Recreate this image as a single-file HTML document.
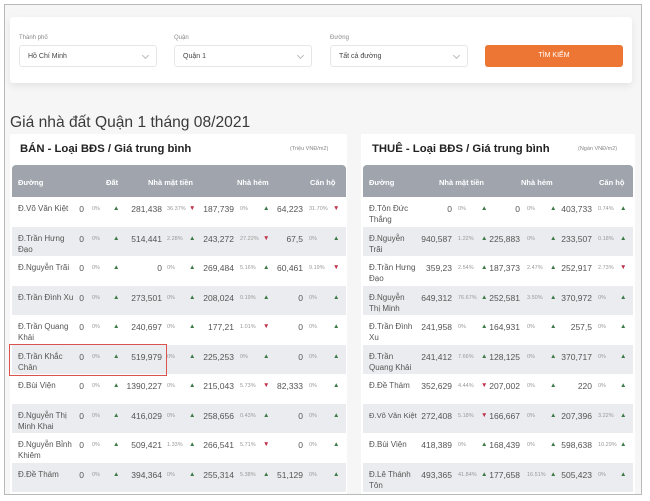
<!DOCTYPE html>
<html><head><meta charset="utf-8">
<style>
*{margin:0;padding:0;box-sizing:border-box}
body{width:650px;height:501px;background:#fff;font-family:"Liberation Sans",sans-serif;position:relative;overflow:hidden;color:#444}
.frame{position:absolute;left:4px;top:4px;width:638px;height:491px;border:1px solid #b9b9b9;background:#f6f6f6}
.card{position:absolute;left:10px;top:17px;width:622px;height:66px;background:#fff;border-radius:3px;box-shadow:0 3px 8px rgba(0,0,0,.08)}
.lbl{position:absolute;top:35px;font-size:6px;color:#888}
.sel{position:absolute;top:45px;height:22px;width:138px;border:1px solid #e6e6e6;border-radius:3px;background:#fff;font-size:7px;color:#444;padding:7px 0 0 8px}
.sel:after{content:"";position:absolute;right:8px;top:7px;width:4px;height:4px;border-right:1px solid #bbb;border-bottom:1px solid #bbb;transform:rotate(45deg)}
.btn{position:absolute;left:485px;top:45px;width:138px;height:22px;background:#ee7634;border-radius:3px;color:#fff;font-size:7px;text-align:center;line-height:22px}
.title{position:absolute;left:10px;top:114px;font-size:15.6px;color:#3a3a3a}
.panel{position:absolute;top:134px;background:#fff;height:360px}
.ph{position:absolute;top:143px;font-size:11.3px;color:#222;font-weight:bold}
.unit{position:absolute;top:146px;font-size:5.5px;color:#888}
.tbl{position:absolute;top:165px}
.hd{height:32px;background:#9fa4ad;border-radius:4px 4px 0 0;position:relative;color:#fff;font-size:7.5px;font-weight:bold}
.hd span{position:absolute;top:13px}
.r{height:29.5px;position:relative;font-size:8.5px;color:#555}
.r span{position:absolute;top:7px;white-space:nowrap}
.nm{left:6px;width:58px;white-space:normal!important;line-height:11px;top:6px!important;font-size:8px}
.t2 .nm{width:47px}
.v{text-align:right;width:60px}
.p{font-size:5.5px;color:#999;top:9px!important}
.u,.d{font-size:6.5px;top:8px!important}
.u{color:#3d7a48}
.d{color:#c0304a}
</style></head><body>
<div class="frame"></div>
<div class="card"></div>
<div class="lbl" style="left:19px">Thành phố</div>
<div class="lbl" style="left:174px">Quận</div>
<div class="lbl" style="left:330px">Đường</div>
<div class="sel" style="left:19px">Hồ Chí Minh</div>
<div class="sel" style="left:174px">Quận 1</div>
<div class="sel" style="left:330px">Tất cả đường</div>
<div class="btn">TÌM KIẾM</div>
<div class="title">Giá nhà đất Quận 1 tháng 08/2021</div>
<div class="panel" style="left:10px;width:337px"></div>
<div class="panel" style="left:361px;width:274px"></div>
<div class="ph" style="left:20px">BÁN - Loại BĐS / Giá trung bình</div>
<div class="unit" style="left:290px">(Triệu VNĐ/m2)</div>
<div class="ph" style="left:372px">THUÊ - Loại BĐS / Giá trung bình</div>
<div class="unit" style="left:578px">(Ngàn VNĐ/m2)</div>

<div class="tbl" style="left:12px;width:334px">
<div class="hd"><span style="left:6px">Đường</span><span style="left:94px">Đất</span><span style="left:136px">Nhà mặt tiền</span><span style="left:225px">Nhà hẻm</span><span style="left:298px">Căn hộ</span></div>
<div>
<div class="r" style="background:#fff"><span class="nm">Đ.Võ Văn Kiệt</span><span class="v" style="left:12px">0</span><span class="p" style="left:80px">0%</span><span class="u" style="left:101px">▲</span><span class="v" style="left:90px">281,438</span><span class="p" style="left:155px">36.37%</span><span class="d" style="left:177px">▼</span><span class="v" style="left:162px">187,739</span><span class="p" style="left:228px">0%</span><span class="u" style="left:251px">▲</span><span class="v" style="left:231px">64,223</span><span class="p" style="left:297px">31.70%</span><span class="d" style="left:321px">▼</span></div>
<div class="r" style="background:#ebecef"><span class="nm">Đ.Trần Hưng Đạo</span><span class="v" style="left:12px">0</span><span class="p" style="left:80px">0%</span><span class="u" style="left:101px">▲</span><span class="v" style="left:90px">514,441</span><span class="p" style="left:155px">2.28%</span><span class="u" style="left:177px">▲</span><span class="v" style="left:162px">243,272</span><span class="p" style="left:228px">27.22%</span><span class="d" style="left:251px">▼</span><span class="v" style="left:231px">67,5</span><span class="p" style="left:297px">0%</span><span class="u" style="left:321px">▲</span></div>
<div class="r" style="background:#fff"><span class="nm">Đ.Nguyễn Trãi</span><span class="v" style="left:12px">0</span><span class="p" style="left:80px">0%</span><span class="u" style="left:101px">▲</span><span class="v" style="left:90px">0</span><span class="p" style="left:155px">0%</span><span class="u" style="left:177px">▲</span><span class="v" style="left:162px">269,484</span><span class="p" style="left:228px">5.16%</span><span class="u" style="left:251px">▲</span><span class="v" style="left:231px">60,461</span><span class="p" style="left:297px">9.19%</span><span class="d" style="left:321px">▼</span></div>
<div class="r" style="background:#ebecef"><span class="nm">Đ.Trần Đình Xu</span><span class="v" style="left:12px">0</span><span class="p" style="left:80px">0%</span><span class="u" style="left:101px">▲</span><span class="v" style="left:90px">273,501</span><span class="p" style="left:155px">0%</span><span class="u" style="left:177px">▲</span><span class="v" style="left:162px">208,024</span><span class="p" style="left:228px">0.19%</span><span class="u" style="left:251px">▲</span><span class="v" style="left:231px">0</span><span class="p" style="left:297px">0%</span><span class="u" style="left:321px">▲</span></div>
<div class="r" style="background:#fff"><span class="nm">Đ.Trần Quang Khải</span><span class="v" style="left:12px">0</span><span class="p" style="left:80px">0%</span><span class="u" style="left:101px">▲</span><span class="v" style="left:90px">240,697</span><span class="p" style="left:155px">0%</span><span class="u" style="left:177px">▲</span><span class="v" style="left:162px">177,21</span><span class="p" style="left:228px">1.01%</span><span class="d" style="left:251px">▼</span><span class="v" style="left:231px">0</span><span class="p" style="left:297px">0%</span><span class="u" style="left:321px">▲</span></div>
<div class="r" style="background:#ebecef"><span class="nm">Đ.Trần Khắc Chân</span><span class="v" style="left:12px">0</span><span class="p" style="left:80px">0%</span><span class="u" style="left:101px">▲</span><span class="v" style="left:90px">519,979</span><span class="p" style="left:155px">0%</span><span class="u" style="left:177px">▲</span><span class="v" style="left:162px">225,253</span><span class="p" style="left:228px">0%</span><span class="u" style="left:251px">▲</span><span class="v" style="left:231px">0</span><span class="p" style="left:297px">0%</span><span class="u" style="left:321px">▲</span></div>
<div class="r" style="background:#fff"><span class="nm">Đ.Bùi Viện</span><span class="v" style="left:12px">0</span><span class="p" style="left:80px">0%</span><span class="u" style="left:101px">▲</span><span class="v" style="left:90px">1390,227</span><span class="p" style="left:155px">0%</span><span class="u" style="left:177px">▲</span><span class="v" style="left:162px">215,043</span><span class="p" style="left:228px">5.73%</span><span class="d" style="left:251px">▼</span><span class="v" style="left:231px">82,333</span><span class="p" style="left:297px">0%</span><span class="u" style="left:321px">▲</span></div>
<div class="r" style="background:#ebecef"><span class="nm">Đ.Nguyễn Thị Minh Khai</span><span class="v" style="left:12px">0</span><span class="p" style="left:80px">0%</span><span class="u" style="left:101px">▲</span><span class="v" style="left:90px">416,029</span><span class="p" style="left:155px">0%</span><span class="u" style="left:177px">▲</span><span class="v" style="left:162px">258,656</span><span class="p" style="left:228px">0.43%</span><span class="u" style="left:251px">▲</span><span class="v" style="left:231px">0</span><span class="p" style="left:297px">0%</span><span class="u" style="left:321px">▲</span></div>
<div class="r" style="background:#fff"><span class="nm">Đ.Nguyễn Bỉnh Khiêm</span><span class="v" style="left:12px">0</span><span class="p" style="left:80px">0%</span><span class="u" style="left:101px">▲</span><span class="v" style="left:90px">509,421</span><span class="p" style="left:155px">1.33%</span><span class="u" style="left:177px">▲</span><span class="v" style="left:162px">266,541</span><span class="p" style="left:228px">5.71%</span><span class="d" style="left:251px">▼</span><span class="v" style="left:231px">0</span><span class="p" style="left:297px">0%</span><span class="u" style="left:321px">▲</span></div>
<div class="r" style="background:#ebecef"><span class="nm">Đ.Đề Thám</span><span class="v" style="left:12px">0</span><span class="p" style="left:80px">0%</span><span class="u" style="left:101px">▲</span><span class="v" style="left:90px">394,364</span><span class="p" style="left:155px">0%</span><span class="u" style="left:177px">▲</span><span class="v" style="left:162px">255,314</span><span class="p" style="left:228px">5.38%</span><span class="u" style="left:251px">▲</span><span class="v" style="left:231px">51,129</span><span class="p" style="left:297px">0%</span><span class="u" style="left:321px">▲</span></div>
</div></div>

<div class="tbl t2" style="left:363px;width:270px">
<div class="hd"><span style="left:6px">Đường</span><span style="left:76px">Nhà mặt tiền</span><span style="left:158px">Nhà hẻm</span><span style="left:236px">Căn hộ</span></div>
<div>
<div class="r" style="background:#fff"><span class="nm">Đ.Tôn Đức Thắng</span><span class="v" style="left:29px">0</span><span class="p" style="left:95px">0%</span><span class="u" style="left:118px">▲</span><span class="v" style="left:97px">0</span><span class="p" style="left:164px">0%</span><span class="u" style="left:187px">▲</span><span class="v" style="left:169px">403,733</span><span class="p" style="left:235px">0.74%</span><span class="u" style="left:257px">▲</span></div>
<div class="r" style="background:#ebecef"><span class="nm">Đ.Nguyễn Trãi</span><span class="v" style="left:29px">940,587</span><span class="p" style="left:95px">1.22%</span><span class="u" style="left:118px">▲</span><span class="v" style="left:97px">225,883</span><span class="p" style="left:164px">0%</span><span class="u" style="left:187px">▲</span><span class="v" style="left:169px">233,507</span><span class="p" style="left:235px">0.18%</span><span class="u" style="left:257px">▲</span></div>
<div class="r" style="background:#fff"><span class="nm">Đ.Trần Hưng Đạo</span><span class="v" style="left:29px">359,23</span><span class="p" style="left:95px">2.54%</span><span class="u" style="left:118px">▲</span><span class="v" style="left:97px">187,373</span><span class="p" style="left:164px">2.47%</span><span class="u" style="left:187px">▲</span><span class="v" style="left:169px">252,917</span><span class="p" style="left:235px">2.73%</span><span class="d" style="left:257px">▼</span></div>
<div class="r" style="background:#ebecef"><span class="nm">Đ.Nguyễn Thị Minh Khai</span><span class="v" style="left:29px">649,312</span><span class="p" style="left:95px">76.67%</span><span class="u" style="left:118px">▲</span><span class="v" style="left:97px">252,581</span><span class="p" style="left:164px">3.50%</span><span class="u" style="left:187px">▲</span><span class="v" style="left:169px">370,972</span><span class="p" style="left:235px">0%</span><span class="u" style="left:257px">▲</span></div>
<div class="r" style="background:#fff"><span class="nm">Đ.Trần Đình Xu</span><span class="v" style="left:29px">241,958</span><span class="p" style="left:95px">0%</span><span class="u" style="left:118px">▲</span><span class="v" style="left:97px">164,931</span><span class="p" style="left:164px">0%</span><span class="u" style="left:187px">▲</span><span class="v" style="left:169px">257,5</span><span class="p" style="left:235px">0%</span><span class="u" style="left:257px">▲</span></div>
<div class="r" style="background:#ebecef"><span class="nm">Đ.Trần Quang Khải</span><span class="v" style="left:29px">241,412</span><span class="p" style="left:95px">7.66%</span><span class="u" style="left:118px">▲</span><span class="v" style="left:97px">128,125</span><span class="p" style="left:164px">0%</span><span class="u" style="left:187px">▲</span><span class="v" style="left:169px">370,717</span><span class="p" style="left:235px">0%</span><span class="u" style="left:257px">▲</span></div>
<div class="r" style="background:#fff"><span class="nm">Đ.Đề Thám</span><span class="v" style="left:29px">352,629</span><span class="p" style="left:95px">4.44%</span><span class="d" style="left:118px">▼</span><span class="v" style="left:97px">207,002</span><span class="p" style="left:164px">0%</span><span class="u" style="left:187px">▲</span><span class="v" style="left:169px">220</span><span class="p" style="left:235px">0%</span><span class="u" style="left:257px">▲</span></div>
<div class="r" style="background:#ebecef"><span class="nm" style="white-space:nowrap!important;font-size:7.6px;width:52px">Đ.Võ Văn Kiệt</span><span class="v" style="left:29px">272,408</span><span class="p" style="left:95px">5.18%</span><span class="d" style="left:118px">▼</span><span class="v" style="left:97px">166,667</span><span class="p" style="left:164px">0%</span><span class="u" style="left:187px">▲</span><span class="v" style="left:169px">207,396</span><span class="p" style="left:235px">3.22%</span><span class="u" style="left:257px">▲</span></div>
<div class="r" style="background:#fff"><span class="nm">Đ.Bùi Viện</span><span class="v" style="left:29px">418,389</span><span class="p" style="left:95px">0%</span><span class="u" style="left:118px">▲</span><span class="v" style="left:97px">168,439</span><span class="p" style="left:164px">0%</span><span class="u" style="left:187px">▲</span><span class="v" style="left:169px">598,638</span><span class="p" style="left:235px">10.29%</span><span class="u" style="left:257px">▲</span></div>
<div class="r" style="background:#ebecef"><span class="nm">Đ.Lê Thánh Tôn</span><span class="v" style="left:29px">493,365</span><span class="p" style="left:95px">41.84%</span><span class="u" style="left:118px">▲</span><span class="v" style="left:97px">177,658</span><span class="p" style="left:164px">16.51%</span><span class="u" style="left:187px">▲</span><span class="v" style="left:169px">505,423</span><span class="p" style="left:235px">0%</span><span class="u" style="left:257px">▲</span></div>
</div></div>

<div style="position:absolute;left:9px;top:344px;width:158px;height:32px;border:1px solid #d9534f"></div>
</body></html>
